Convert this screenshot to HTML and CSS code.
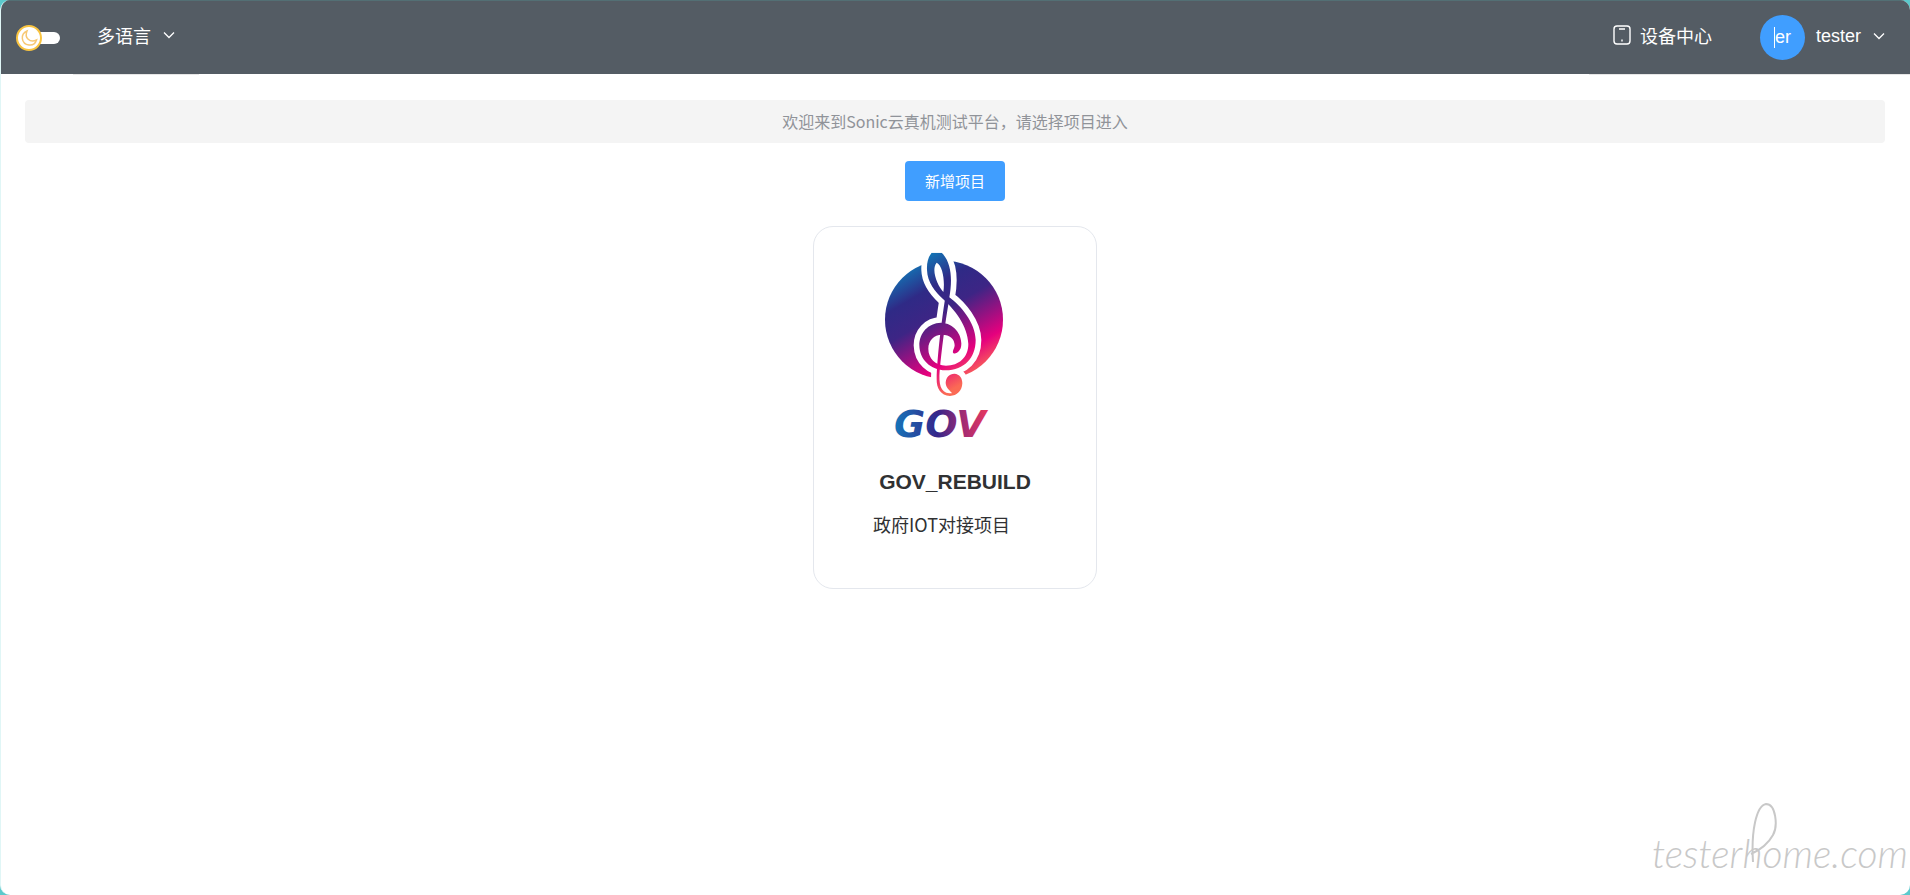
FILE: index.html
```
<!DOCTYPE html>
<html lang="zh-CN">
<head>
    <meta charset="UTF-8">
    <meta name="viewport" content="width=device-width, initial-scale=1.0">
    <title>Sonic云真机测试平台</title>
    <link rel="stylesheet" href="styles.css">
</head>
<body>
    <div class="window">
        <header class="header">
            <label class="theme-switch">
                <input type="checkbox" aria-label="Theme">
                <svg class="moon" viewBox="0 0 22 22">
                    <path d="M9 4C2 7 3 17 11 18C15 18.500 17.500 16 18.500 13C12 16 6 11 9 4Z"/>
                </svg>
            </label>
            <nav class="menu menu-left">
                <button class="menu-item" type="button">
                    多语言
                    <svg class="arrow" viewBox="0 0 12 8"><path d="M1 1.500L6 6.500L11 1.500"/></svg>
                </button>
            </nav>
            <nav class="menu menu-right">
                <a class="menu-item" href="#devices">
                    <svg class="phone" viewBox="0 0 18 20">
                        <rect x="1" y="1" width="16" height="18" rx="3"/>
                        <path d="M6 4H12M9 14.500V16.500"/>
                    </svg>
                    设备中心
                </a>
                <button class="menu-item user" type="button">
                    <span class="avatar"><span class="avatar-text">er</span></span>
                    <span class="user-name">tester</span>
                    <svg class="arrow" viewBox="0 0 12 8"><path d="M1 1.500L6 6.500L11 1.500"/></svg>
                </button>
            </nav>
        </header>

        <main class="main">
            <div class="alert">欢迎来到Sonic云真机测试平台，请选择项目进入</div>
            <button class="add-button" type="button">新增项目</button>

            <a class="card" href="#project">
                <svg class="logo" viewBox="-3 34 570 600">
                    <defs>
                        <linearGradient id="clef-fill" gradientUnits="userSpaceOnUse" x1="130" y1="90" x2="330" y2="430">
                            <stop offset="0" stop-color="#0f7cba"/>
                            <stop offset="0.250" stop-color="#2f2a86"/>
                            <stop offset="0.450" stop-color="#3d2585"/>
                            <stop offset="0.800" stop-color="#e5007e"/>
                            <stop offset="1" stop-color="#fb6a55"/>
                        </linearGradient>
                        <linearGradient id="text-fill" gradientUnits="userSpaceOnUse" x1="108" y1="0" x2="384" y2="0">
                            <stop offset="0" stop-color="#1673b8"/>
                            <stop offset="0.450" stop-color="#35268a"/>
                            <stop offset="0.750" stop-color="#a72c72"/>
                            <stop offset="1" stop-color="#e8395f"/>
                        </linearGradient>
                        <clipPath id="logo-top"><rect x="0" y="51" width="570" height="600"/></clipPath>
                        <g id="clef">
                            <path fill-rule="evenodd" d="M215 51C204 65 200 82 201 103C202 140 226 169 249 190C284 222 323 270 325 325C325 365 297 390 258 390C225 389 205 367 205 339C205 315 222 297 246 297C270 297 284 310 284 329C284 338 277 344 279 351C285 358 297 350 302 338C311 309 290 263 243 261C204 262 178 292 178 329C179 372 211 404 257 404C313 403 347 367 347 313C346 261 302 210 268 185C277 135 276 82 245 51ZM230 81C249 90 255 138 250 169C233 151 212 102 230 81Z"/>
                            <path d="M256 185L268 190C255 260 244 350 239 405C236 445 241 470 268 473C290 474 258 466 257 441C258 424 268 415 283 414C299 415 307 427 307 443C306 466 291 480 270 481C242 480 229 457 230 430C231 370 244 260 256 185Z"/>
                        </g>
                    </defs>
                    <circle cx="252" cy="252" r="177" fill="url(#clef-fill)"/>
                    <path d="M252 200L300 240L335 310L300 385L210 370L190 300L240 260Z" fill="#ffffff"/>
                    <use href="#clef" fill="#ffffff" stroke="#ffffff" stroke-width="34" stroke-linejoin="round"/>
                    <g clip-path="url(#logo-top)"><use href="#clef" fill="url(#clef-fill)"/></g>
                    <text class="logo-text" x="102" y="605" fill="url(#text-fill)">GOV</text>
                </svg>
                <h2 class="card-title">GOV_REBUILD</h2>
                <p class="card-desc">政府IOT对接项目</p>
            </a>
        </main>

        <div class="watermark">
            <svg class="flourish" viewBox="0 0 30 60"><path d="M4 60C2 30 7 4 17 2C27 2 29 24 24 33C19 42 11 48 2 52"/></svg>
            testerhome.com
        </div>
    </div>
</body>
</html>
```
FILE: styles.css
```
* {
    box-sizing: border-box;
}

body {
    margin: 0;
    background-color: #5cc9cc;
    color: #303133;
    font-family: "Liberation Sans", "Noto Sans CJK SC", sans-serif;
    font-size: 18px;
}

button {
    border: none;
    font-family: inherit;
    cursor: pointer;
}

a {
    color: inherit;
    text-decoration: none;
}

.window {
    position: relative;
    min-height: 100vh;
    background-color: #ffffff;
    border-left: 1px solid #e0f6f6;
    border-radius: 10px;
    overflow: hidden;
}

/* Top bar */
.header {
    display: flex;
    height: 74px;
    padding-left: 15px;
    background-color: #545c64;
    border-top: 1px solid #536f74;
}

.theme-switch {
    position: relative;
    align-self: center;
    width: 44px;
    height: 26px;
}

.theme-switch input {
    display: block;
    appearance: none;
    width: 39px;
    height: 12px;
    margin: 7px 0 0 5px;
    border-radius: 6px;
    background-color: #ffffff;
}

.moon {
    position: absolute;
    left: 0;
    top: 0;
    width: 26px;
    height: 26px;
    border: 2px solid #f9c440;
    border-radius: 50%;
    background-color: #ffffff;
    fill: none;
    stroke: #f7c873;
    stroke-width: 1.5;
}

.menu {
    display: flex;
    height: 74px;
    border-bottom: 1px solid #e6e6e6;
}

.menu-left {
    margin-left: 13px;
}

.menu-right {
    margin-left: auto;
}

.menu-item {
    display: flex;
    align-items: center;
    padding: 0 24px 5px;
    background: none;
    color: #ffffff;
    font-size: 18px;
}

.menu-item.user {
    padding: 0 25px 0 24px;
}

.user-name,
.user .arrow {
    margin-bottom: 3px;
}

.arrow {
    width: 12px;
    height: 8px;
    margin-left: 12px;
    fill: none;
    stroke: #ffffff;
    stroke-width: 1.3;
}

.phone {
    width: 18px;
    height: 20px;
    margin-right: 9px;
    fill: none;
    stroke: #ffffff;
    stroke-width: 1.4;
}

.avatar {
    display: flex;
    align-items: center;
    justify-content: center;
    width: 45px;
    height: 45px;
    margin-right: 11px;
    border-radius: 50%;
    background-color: #409eff;
}

.avatar-text {
    border-left: 1px solid #ffffff;
}

/* Project list */
.main {
    display: flex;
    flex-direction: column;
    align-items: center;
    padding: 26px 25px 26px 24px;
}

.alert {
    width: 100%;
    padding: 9px;
    border-radius: 4px;
    background-color: #f4f4f4;
    color: #909399;
    font-family: "Noto Sans CJK SC", sans-serif;
    font-size: 16px;
    line-height: 25px;
    text-align: center;
}

.add-button {
    height: 40px;
    margin-top: 18px;
    padding: 0 20px 2px;
    border-radius: 4px;
    background-color: #409eff;
    color: #ffffff;
    font-size: 15px;
}

.card {
    width: 284px;
    height: 363px;
    margin-top: 25px;
    padding: 20px 45px;
    border: 1px solid #e4e7ed;
    border-radius: 20px;
}

.logo {
    display: block;
    width: 190px;
    height: 200px;
}

.logo-text {
    font-family: "DejaVu Sans", sans-serif;
    font-size: 114px;
    font-style: italic;
    font-weight: 700;
}

.card-title {
    margin: 22px 0 0;
    font-size: 21px;
    line-height: 26px;
    text-align: center;
}

.card-desc {
    margin: 16px 0 0;
    padding-left: 14px;
    font-family: "Noto Sans CJK SC", sans-serif;
    line-height: 26px;
}

/* Site mark in the corner */
.watermark {
    position: absolute;
    right: 2px;
    bottom: 22px;
    color: #c8c8c8;
    font-family: Lato, sans-serif;
    font-size: 39px;
    font-style: italic;
    font-weight: 300;
    line-height: 40px;
}

.flourish {
    position: absolute;
    left: 97px;
    bottom: 11px;
    width: 30px;
    height: 60px;
    fill: none;
    stroke: #c8c8c8;
    stroke-width: 2px;
}
```
